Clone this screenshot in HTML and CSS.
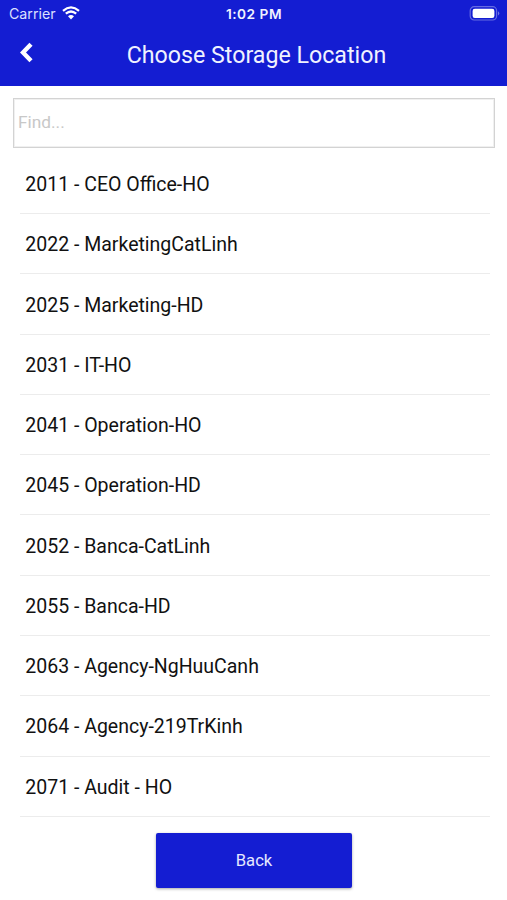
FILE: index.html
```html
<!DOCTYPE html>
<html lang="en">
<head>
<meta charset="utf-8">
<title>Choose Storage Location</title>
<link rel="stylesheet" href="styles.css">
</head>
<body>
<header class="header">
  <div class="status">
    <div class="carrier"><span>Carrier</span>
      <svg class="wifi" viewBox="0 0 18 14" width="18" height="14"><path d="M1 4.8Q9-2 17 4.8M3.8 7.7Q9 3.3 14.2 7.7" fill="none" stroke="#fff" stroke-width="2.2"/><path d="M6 10.3Q9 7.8 12 10.3L9 13.5Z" fill="#fff"/></svg>
    </div>
    <div class="time">1:02 PM</div>
    <svg class="battery" viewBox="0 0 31 15" width="31" height="15"><rect x="1.2" y=".7" width="26.4" height="13.3" rx="4" fill="none" stroke="#fff" stroke-opacity=".35" stroke-width="1.2"/><rect x="3.6" y="2.7" width="21.8" height="9.3" rx="2.2" fill="#fff"/><path d="M29 5.2Q31.6 7.4 29 9.6Z" fill="#fff" fill-opacity=".4"/></svg>
  </div>
  <div class="nav">
    <svg class="chevron" viewBox="0 0 14 21" width="14" height="21"><path d="M11 2.2 3 10.5 11 18.8" fill="none" stroke="#fff" stroke-width="4.4"/></svg>
    <h1 class="title">Choose Storage Location</h1>
  </div>
</header>
<main class="main">
  <input class="find" type="text" placeholder="Find..." aria-label="Find">
  <ul class="list">
    <li class="item"><span>2011 - CEO Office-HO</span></li>
    <li class="item"><span>2022 - MarketingCatLinh</span></li>
    <li class="item"><span>2025 - Marketing-HD</span></li>
    <li class="item"><span>2031 - IT-HO</span></li>
    <li class="item"><span>2041 - Operation-HO</span></li>
    <li class="item"><span>2045 - Operation-HD</span></li>
    <li class="item"><span>2052 - Banca-CatLinh</span></li>
    <li class="item"><span>2055 - Banca-HD</span></li>
    <li class="item"><span>2063 - Agency-NgHuuCanh</span></li>
    <li class="item"><span>2064 - Agency-219TrKinh</span></li>
    <li class="item"><span>2071 - Audit - HO</span></li>
  </ul>
  <button class="back" type="button">Back</button>
</main>
</body>
</html>
```
FILE: styles.css
```css
* { box-sizing: border-box; }
body {
  margin: 0;
  height: 900px;
  overflow: hidden;
  background: #fff;
  color: #111;
  font-family: Roboto, sans-serif;
}
.header {
  height: 86.4px;
  background: #141dd2;
  color: #f0f2ff;
}
.status {
  display: grid;
  grid-template-columns: 1fr auto 1fr;
  align-items: center;
  height: 27px;
  padding: 0 7px 0 9px;
  font-family: Inter, sans-serif;
}
.carrier { display: flex; align-items: center; gap: 6px; font-size: 14.2px; color: #dce0ff; }
.wifi { display: block; margin-top: -1px; }
.time { font-size: 13.7px; font-weight: 600; letter-spacing: .5px; margin-left: -1px; }
.battery { display: block; justify-self: end; }
.nav {
  display: grid;
  grid-template-columns: 33px 1fr 28px;
  align-items: center;
  height: 56px;
  padding-left: 20px;
  padding-right: 19px;
}
.chevron { display: block; margin-top: -5px; }
.title { margin: 0; text-align: center; font-size: 23.2px; font-weight: 400; line-height: 28px; }
.main { display: flex; flex-direction: column; padding: 12px 12px 0 13px; }
.find {
  width: 100%;
  height: 49.6px;
  margin: 0;
  padding: 0 4px 2px;
  border: 1px solid #d3d3d3;
  border-radius: 0;
  background: #fff;
  box-shadow: inset 0 0 0 1px #f0f0f0;
  font: 17.3px Roboto, sans-serif;
}
.find::placeholder { color: #c8c8c8; }
.list { list-style: none; margin: 5.9px 5px 0 7px; padding: 0; }
.item {
  display: flex;
  align-items: center;
  height: 60.28px;
  padding: 2px 0 0 5.3px;
  border-bottom: 1px solid #ececec;
  font-size: 19.5px;
}
.back {
  align-self: center;
  width: 196px;
  height: 55px;
  margin: 16px 0 0;
  padding: 0;
  border: 0;
  border-radius: 2px;
  background: #141dd2;
  box-shadow: 0 1px 3px rgba(0, 0, 0, .35);
  color: #e6e9ff;
  font: 16.6px Roboto, sans-serif;
}
```
